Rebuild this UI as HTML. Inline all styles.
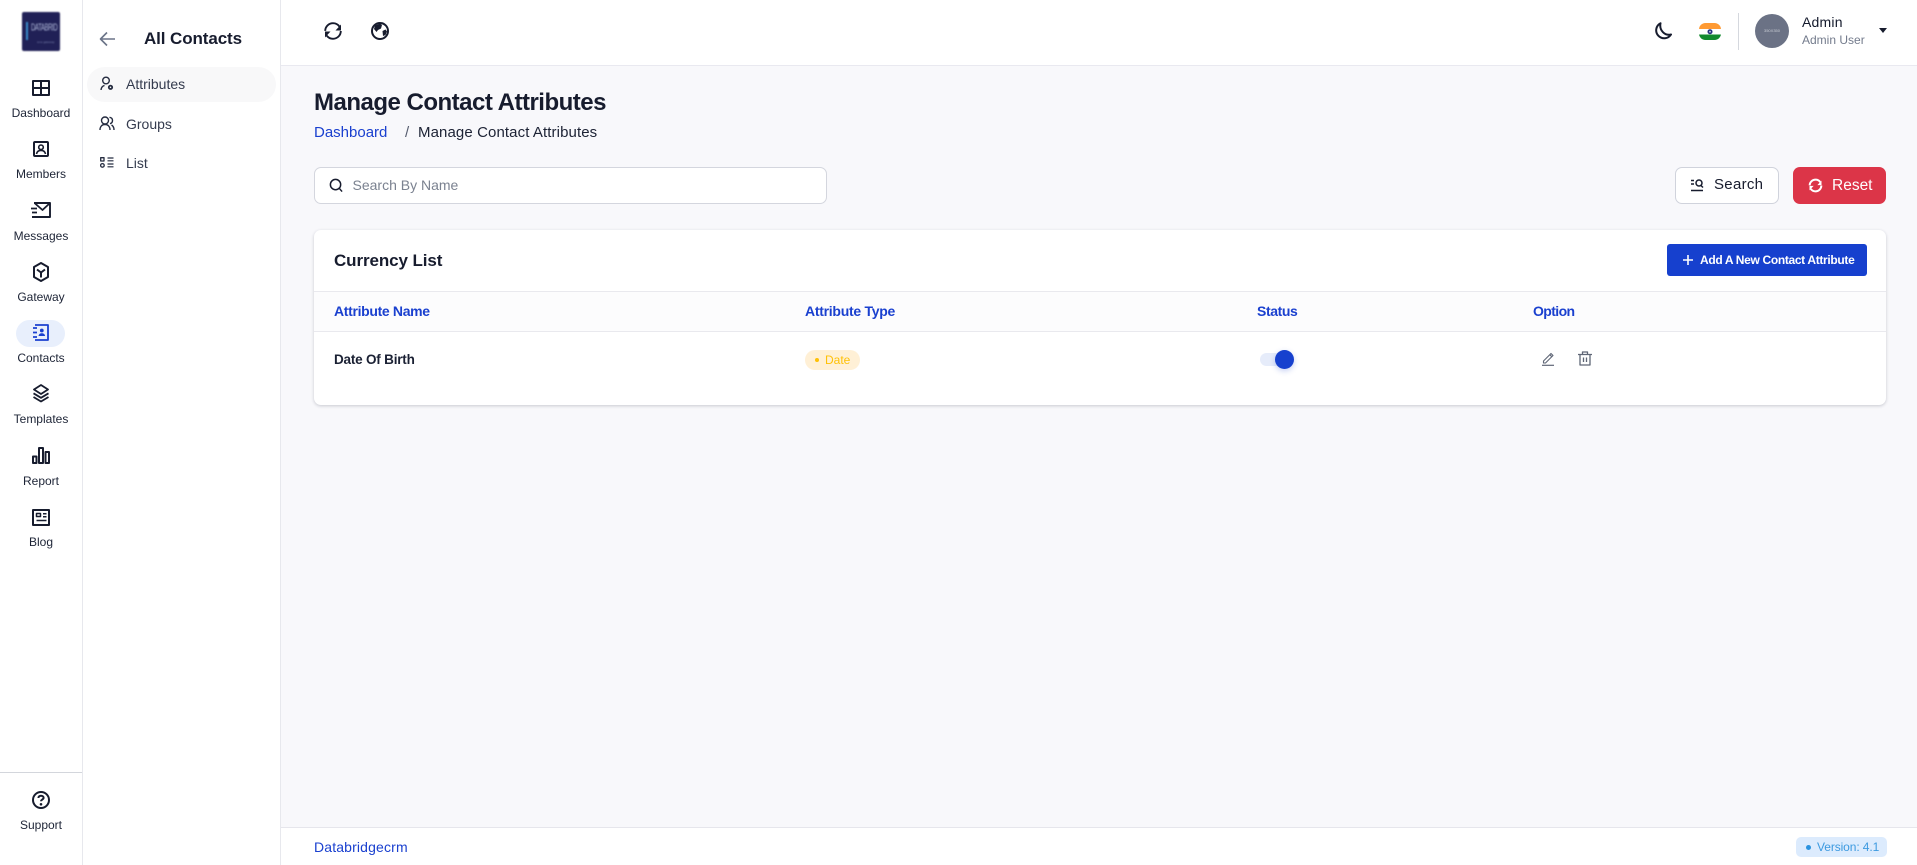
<!DOCTYPE html>
<html lang="en"><head><meta charset="utf-8"><title>Manage Contact Attributes</title>
<style>
*{box-sizing:border-box;margin:0;padding:0}
html,body{width:1917px;height:865px;overflow:hidden;background:#f8f8fb;font-family:"Liberation Sans",sans-serif;color:#171c2e}
.a{position:absolute}
.t{position:absolute;white-space:nowrap;line-height:20px;transform:translateY(-50%)}
.nav{font-size:12px;left:0;width:82px;text-align:center;color:#1d2436}
.sub{font-size:14px;color:#343b4e;left:126px}
svg{position:absolute;fill:none;stroke:#171c2e;stroke-width:2;stroke-linecap:butt;stroke-linejoin:round}
.b{background:#fff}
.th{font-size:14px;font-weight:700;color:#1a40cf;top:311px}
</style></head><body>
<div class="a b" style="left:0;top:0;width:83px;height:865px;border-right:1px solid #e7e8ed"></div>
<div class="a b" style="left:83px;top:0;width:198px;height:865px;border-right:1px solid #e7e8ed"></div>
<div class="a b" style="left:281px;top:0;width:1636px;height:66px;border-bottom:1px solid #e9e9f0"></div>
<div class="a b" style="left:281px;top:827px;width:1636px;height:38px;border-top:1px solid #e6e6ec"></div>

<div class="a" style="left:22px;top:12px;width:38px;height:39px;background:#15154d;border-radius:2px;overflow:hidden;filter:blur(.8px);opacity:.95">
<div class="a" style="left:4px;top:10px;width:2px;height:18px;background:#2f86c9"></div>
<div class="a" style="left:9px;top:10px;font-size:6px;line-height:8px;color:#aab3d6;white-space:nowrap;letter-spacing:-.4px;transform:scaleY(1.7);transform-origin:0 0">DATABRID</div>
<div class="a" style="left:15px;top:28px;font-size:3px;line-height:4px;color:#7078a8;white-space:nowrap">sms gateway</div>
</div>

<!-- main nav -->
<svg style="left:32px;top:80px" width="18" height="16" viewBox="0 0 18 16"><rect x="1" y="1" width="16" height="14"/><path d="M9 1v14M1 8h16"/></svg>
<div class="t nav" style="top:113px">Dashboard</div>
<svg style="left:33px;top:141px" width="16" height="16" viewBox="0 0 16 16"><rect x="1" y="1" width="14" height="14" rx="1"/><circle cx="8" cy="6.300" r="2.300" stroke-width="1.600"/><path d="M3.500 13c.5-2.600 2.200-3.600 4.500-3.600s4 1 4.500 3.600" stroke-width="1.600"/></svg>
<div class="t nav" style="top:174px">Members</div>
<svg style="left:31px;top:201px" width="20" height="17" viewBox="0 0 20 17"><path d="M3 2H19V16H1" stroke-width="1.900"/><path d="M3.500 2l8 7L19 2M0 7.500h6M1 11.500h5" stroke-width="1.800"/></svg>
<div class="t nav" style="top:236px">Messages</div>
<svg style="left:32px;top:262px" width="18" height="20" viewBox="0 0 18 20"><path d="M9 1l7 4v10l-7 4-7-4V5zM5 7.500L9 10.500 13 7.500M9 10.500V15.500" stroke-width="2"/></svg>
<div class="t nav" style="top:297px">Gateway</div>

<div class="a" style="left:16px;top:320px;width:49px;height:27px;border-radius:14px;background:#e8effc"></div>
<svg style="left:32px;top:324px;stroke:#1a40cf" width="17" height="17" viewBox="0 0 17 17"><path d="M3 1h13v15H3" stroke-width="1.800"/><path d="M1 4h4M1 8.500h4M1 13h4" stroke-width="1.700"/><circle cx="9.800" cy="6.500" r="1.900" fill="#1a40cf" stroke="none"/><path d="M6.500 12c.3-2 1.600-2.800 3.300-2.800s3 .8 3.300 2.800z" fill="#1a40cf" stroke="none"/></svg>
<div class="t nav" style="top:358px">Contacts</div>

<svg style="left:32px;top:384px" width="18" height="19" viewBox="0 0 18 19"><path d="M9 1l7 4.500L9 10 2 5.500zM1.500 9.300L9 13.800l7.500-4.500M1.500 13L9 17.500l7.500-4.500" stroke-width="1.800"/></svg>
<div class="t nav" style="top:419px">Templates</div>
<svg style="left:32px;top:447px" width="18" height="17" viewBox="0 0 18 17"><rect x="1" y="9.500" width="3.500" height="6.500"/><rect x="7" y="1" width="4" height="15"/><rect x="13.500" y="5" width="3.500" height="11"/></svg>
<div class="t nav" style="top:481px">Report</div>
<svg style="left:32px;top:509px" width="18" height="17" viewBox="0 0 18 17"><rect x="1" y="1" width="16" height="15"/><rect x="4.500" y="4.500" width="4" height="3" stroke-width="1.500"/><path d="M11 4.800h3.500M11 7.800h3.500M4.500 11.500h10" stroke-width="1.500"/></svg>
<div class="t nav" style="top:542px">Blog</div>

<div class="a" style="left:0;top:772px;width:82px;height:1px;background:#d3d6dc"></div>
<svg style="left:32px;top:791px" width="18" height="18" viewBox="0 0 18 18"><circle cx="9" cy="9" r="8"/><path d="M6.400 7c0-1.500 1.200-2.300 2.600-2.300s2.600.8 2.600 2.100c0 1.800-2.600 1.800-2.600 3.500" stroke-width="2"/><circle cx="9" cy="13.300" r="1.300" fill="#171c2e" stroke="none"/></svg>
<div class="t nav" style="top:825px">Support</div>

<!-- sub nav -->
<svg style="left:99px;top:31px;stroke:#6b7488" width="17" height="16" viewBox="0 0 17 16"><path d="M16 8H2M8 1.500L1.500 8 8 14.500" stroke-width="1.600"/></svg>
<div class="t" style="left:144px;top:39px;font-size:17px;font-weight:700;letter-spacing:-.1px;color:#171c2e">All Contacts</div>
<div class="a" style="left:87px;top:67px;width:189px;height:35px;border-radius:18px;background:#f8f8f9"></div>
<svg style="left:100px;top:76px;stroke:#252c40" width="14" height="15" viewBox="0 0 14 15"><circle cx="6" cy="4.500" r="3.300" stroke-width="1.400"/><path d="M1 14c.2-2.500 1.300-4 3.500-4.600" stroke-width="1.400"/><circle cx="10.500" cy="11.300" r="1.700" stroke-width="1.800"/></svg>
<div class="t sub" style="top:84px">Attributes</div>
<svg style="left:99px;top:116px;stroke:#252c40" width="16" height="15" viewBox="0 0 16 15"><circle cx="6" cy="4.500" r="3.500" stroke-width="1.400"/><path d="M1 14c0-3.500 2-5.500 5-5.500s5 2 5 5.500M10.500 1.300c2 .3 3 1.700 3 3.200s-1 2.800-2.500 3.200M12.500 9c1.500.8 2.500 2.500 2.500 5" stroke-width="1.400"/></svg>
<div class="t sub" style="top:124px">Groups</div>
<svg style="left:100px;top:157px;stroke:#252c40" width="14" height="11" viewBox="0 0 14 11"><rect x=".7" y=".7" width="3.300" height="3.300" stroke-width="1.300"/><circle cx="2.400" cy="8.400" r="1.800" stroke-width="1.300"/><path d="M7.500 1h6M7.500 3.800h6M7.500 7h6M7.500 9.800h6" stroke-width="1.200"/></svg>
<div class="t sub" style="top:163px">List</div>

<!-- topbar -->
<svg style="left:323px;top:21px" width="20" height="20" viewBox="0 0 20 20"><circle cx="10" cy="10" r="7.800" stroke-width="1.900" stroke-dasharray="19.500 5"/><path d="M18 3.500V9.500H12.500zM2 16.500V10.500H7.500z" fill="#171c2e" stroke="none"/></svg>
<svg style="left:371px;top:22px" width="18" height="18" viewBox="0 0 18 18"><circle cx="9" cy="9" r="8"/><path d="M4 3.500L9 1.500l2 1.500-1 3.500-3 1.500L5.500 10 3 7zM11.500 9l3-1.500 1.500 2-1.500 3.500-2.500 1z" fill="#171c2e" stroke="none"/></svg>
<svg style="left:1654px;top:22px" width="18" height="18" viewBox="0 0 18 18"><path d="M6.500 1.200A8 8 0 1 0 17 12.500C11 14 5 8.500 6.500 1.200z" stroke-width="2"/></svg>
<svg style="left:1699px;top:23px;stroke:none" width="22" height="17" viewBox="0 0 22 17"><clipPath id="f"><rect width="22" height="17" rx="6.500"/></clipPath><g clip-path="url(#f)"><rect width="22" height="6" fill="#ff9a33"/><rect y="6" width="22" height="5.500" fill="#fff"/><rect y="11.500" width="22" height="5.500" fill="#138a2f"/><circle cx="11" cy="8.700" r="2.500" fill="#27307f"/><circle cx="11" cy="8.700" r=".9" fill="#c8cbe6"/></g></svg>
<div class="a" style="left:1738px;top:13px;width:1px;height:37px;background:#d5d8de"></div>
<div class="a" style="left:1755px;top:14px;width:34px;height:34px;border-radius:50%;background:#6b7285;color:#c8ccd4;font-size:4px;line-height:34px;text-align:center">350X350</div>
<div class="t" style="left:1802px;top:22px;font-size:14px;color:#141a2c;letter-spacing:.2px">Admin</div>
<div class="t" style="left:1802px;top:40px;font-size:12px;color:#737b8c">Admin User</div>
<div class="a" style="left:1879px;top:28px;width:0;height:0;border:4px solid transparent;border-top:5px solid #171c2e;border-bottom:0"></div>

<!-- heading -->
<div class="t" style="left:314px;top:103px;font-size:24px;font-weight:700;letter-spacing:-.5px">Manage Contact Attributes</div>
<div class="t" style="left:314px;top:132.500px;font-size:15px;color:#1a40cf">Dashboard</div>
<div class="t" style="left:405px;top:132.500px;font-size:15px;color:#555c6e">/</div>
<div class="t" style="left:418px;top:132.500px;font-size:15px;letter-spacing:.1px;color:#1c2234">Manage Contact Attributes</div>

<div class="a b" style="left:314px;top:167px;width:513px;height:37px;border:1px solid #d4d6de;border-radius:7px"></div>
<svg style="left:329px;top:178px;stroke-width:1.600" width="14" height="15" viewBox="0 0 15 16"><circle cx="7" cy="7" r="5.500"/><path d="M11 11l3 3.500"/></svg>
<div class="t" style="left:352.500px;top:185px;font-size:14px;color:#7b8290">Search By Name</div>

<div class="a b" style="left:1675px;top:167px;width:104px;height:37px;border:1px solid #d0d3dc;border-radius:7px"></div>
<svg style="left:1690px;top:178px;stroke-width:1.500" width="14" height="14" viewBox="0 0 14 14"><path d="M1 2.500h3M1 6h3M1 12.500h12"/><circle cx="9" cy="5" r="3"/><path d="M11 7.500l2 2"/></svg>
<div class="t" style="left:1714px;top:185px;font-size:15px;color:#171c2e;letter-spacing:.3px">Search</div>
<div class="a" style="left:1793px;top:167px;width:93px;height:37px;background:#dc3548;border-radius:7px"></div>
<svg style="left:1808px;top:178px;stroke:#fff" width="15" height="15" viewBox="0 0 20 20"><circle cx="10" cy="10" r="7.800" stroke-width="2.600" stroke-dasharray="19.500 5"/><path d="M18 3.500V9.500H12.500zM2 16.500V10.500H7.500z" fill="#fff" stroke="none"/></svg>
<div class="t" style="left:1832px;top:185.500px;font-size:15.500px;color:#fff">Reset</div>

<!-- card -->
<div class="a b" style="left:314px;top:230px;width:1572px;height:175px;border-radius:7px;box-shadow:0 1px 3px rgba(30,35,60,.22)"></div>
<div class="a" style="left:314px;top:291px;width:1572px;height:41px;background:#fcfcfd;border-top:1px solid #e9e9ee;border-bottom:1px solid #e9e9ee"></div>
<div class="t" style="left:334px;top:260.500px;font-size:17px;font-weight:700;letter-spacing:-.1px">Currency List</div>
<div class="a" style="left:1667px;top:244px;width:200px;height:32px;background:#1640ce;border-radius:3px"></div>
<svg style="left:1682px;top:254px;stroke:#fff" width="12" height="12" viewBox="0 0 12 12"><path d="M6 1v10M1 6h10" stroke-width="1.600"/></svg>
<div class="t" style="left:1700px;top:260px;font-size:12px;font-weight:700;color:#fff;letter-spacing:-.33px">Add A New Contact Attribute</div>

<div class="t th" style="left:334px;letter-spacing:-.33px">Attribute Name</div>
<div class="t th" style="left:805px;letter-spacing:-.27px">Attribute Type</div>
<div class="t th" style="left:1257px;letter-spacing:-.4px">Status</div>
<div class="t th" style="left:1533px;letter-spacing:-.6px">Option</div>

<div class="t" style="left:334px;top:360px;font-size:13.500px;font-weight:700;color:#1a2033;letter-spacing:-.2px">Date Of Birth</div>
<div class="a" style="left:805px;top:350px;width:55px;height:20px;border-radius:10px;background:#fff0d6"></div>
<div class="a" style="left:815px;top:358px;width:4px;height:4px;border-radius:50%;background:#ffc107"></div>
<div class="t" style="left:825px;top:360px;font-size:12px;color:#ffc107">Date</div>

<div class="a" style="left:1260px;top:353px;width:26px;height:13px;border-radius:7px;background:#e6ecfa"></div>
<div class="a" style="left:1275px;top:350px;width:19px;height:19px;border-radius:50%;background:#1640ce;box-shadow:0 2px 6px rgba(22,64,206,.25)"></div>

<svg style="left:1541px;top:351px;stroke:#5f6676" width="14" height="15" viewBox="0 0 14 15"><path d="M2.500 10L10 2.500l2 2L4.500 12H2.500zM8.800 3.700l2 2" stroke-width="1.100"/><path d="M1 14.300h12" stroke-width="1.200"/></svg>
<svg style="left:1578px;top:351px;stroke:#5f6676" width="14" height="15" viewBox="0 0 14 15"><path d="M0 3.500h14M4.500 3.500V1h5v2.500M2 3.500V14h10V3.500M5.500 6.500v4.500M8.500 6.500v4.500" stroke-width="1.300"/></svg>

<!-- footer -->
<div class="t" style="left:314px;top:847px;font-size:14px;color:#1a40cf;letter-spacing:.15px">Databridgecrm</div>
<div class="a" style="left:1796px;top:837px;width:91px;height:20px;border-radius:5px;background:#dcebfd"></div>
<div class="a" style="left:1806px;top:845px;width:5px;height:5px;border-radius:50%;background:#2b93e0"></div>
<div class="t" style="left:1817px;top:847px;font-size:12px;color:#3d9ae0;letter-spacing:-.1px">Version: 4.1</div>
</body></html>
